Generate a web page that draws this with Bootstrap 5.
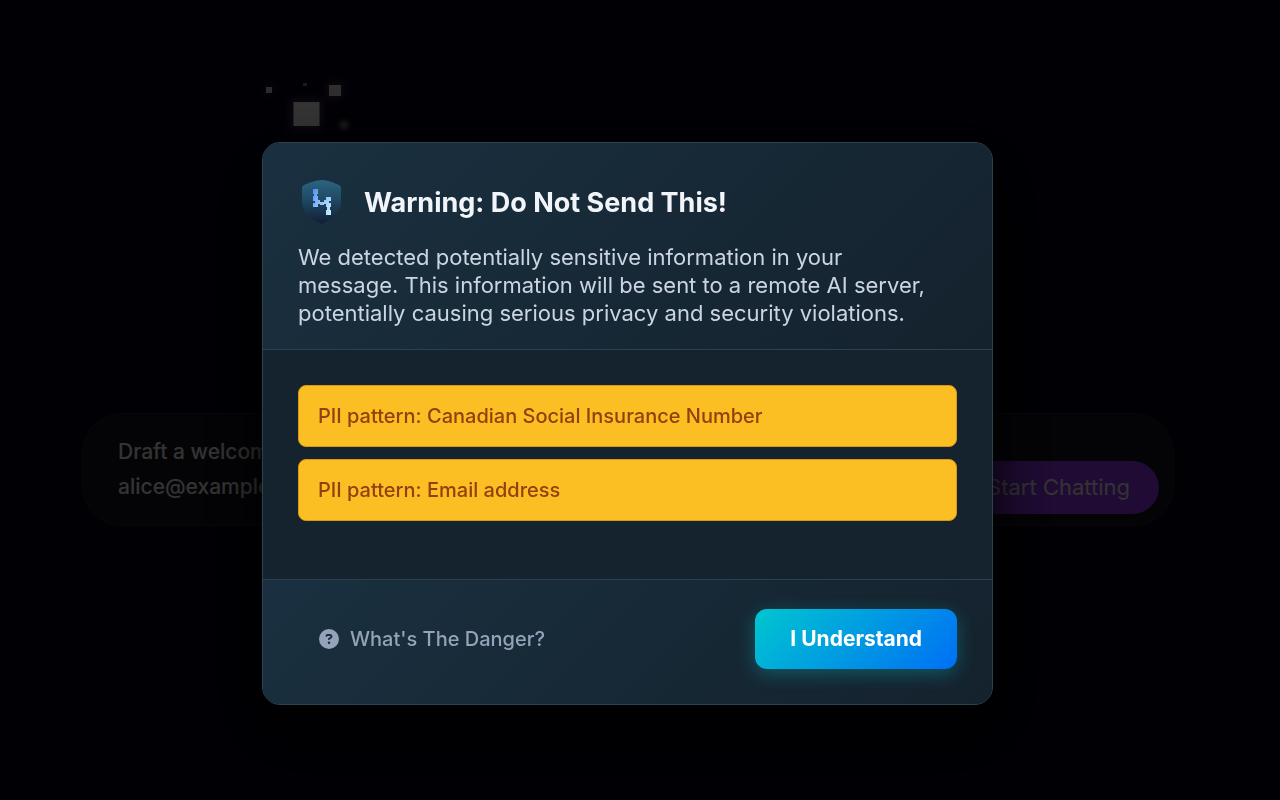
<!DOCTYPE html>
<html lang="en">
<head>
<meta charset="utf-8">
<meta name="viewport" content="width=device-width, initial-scale=1">
<title>Warning: Do Not Send This!</title>
<link href="https://cdn.jsdelivr.net/npm/bootstrap@5.3.0/dist/css/bootstrap.min.css" rel="stylesheet">
<style>
  body { font-family: Inter, "Liberation Sans", sans-serif; background: #05001a; color: #fff; }

  .stage { padding: 72px 106px 72px 82px; }
  .pixels { width: 112px; height: 64px; margin-left: 174px; }
  .composer { margin-top: 277px; padding: 20px 14px 11px 35px; background: #141420; border: 1px solid #26262e; border-radius: 40px; }
  .prompt-text { background: none; border: 0; color: #fff; font-size: 21px; font-weight: 500; line-height: 35px; height: 80px; resize: none; outline: 0; overflow: hidden; }
  .btn-start { --bs-btn-color: #fff; --bs-btn-bg: #9a38ff; --bs-btn-border-color: #9a38ff; font-size: 22px; line-height: 33px; padding: 9px 28px; border-radius: 27px; }

  .modal-backdrop { --bs-backdrop-opacity: .8; }
  .modal { padding: 142px 25px 24px 0; }
  .modal-dialog { max-width: 731px; margin: 0 auto; }
  .modal-content { --bs-modal-bg: #14232d; color: #cbd5e1; border: 1px solid #2d4350; border-radius: 18px; overflow: hidden; box-shadow: 0 24px 60px #000; }
  .modal-header, .modal-footer { background: linear-gradient(135deg, #1a3040, #14222d); border-color: #2a4251; border-radius: 0; }
  .modal-header { padding: 36px 35px 22px; }
  .shield { width: 46px; height: 46px; }
  .modal-title { color: #f1f5f9; font-size: 27px; line-height: 48px; font-weight: 700; }
  .lead-copy { max-width: 640px; font-size: 22px; line-height: 28px; }
  .modal-body { padding: 35px 35px 58px; }
  .findings { gap: 12px; }
  .finding { background: #fbbf24; color: #92400e; border: 1px solid #d99a12; border-radius: 8px; padding: 15px 19px; font-size: 20px; line-height: 30px; font-weight: 500; }
  .modal-footer { padding: 29px 35px 35px; }
  .btn-help { --bs-btn-color: #94a3b8; gap: 11px; font-size: 20px; line-height: 30px; font-weight: 500; padding: 8px 21px; border: 0; }
  .btn-accept { --bs-btn-color: #fff; background: linear-gradient(135deg, #00c6cf, #006ff5); font-size: 21px; line-height: 30px; font-weight: 700; padding: 15px 35px; border: 0; border-radius: 12px; box-shadow: 0 5px 18px rgba(0, 198, 207, .32); }
</style>
</head>
<body>
<main class="stage">
  <svg class="pixels d-block" viewBox="0 0 112 64" aria-hidden="true">
    <defs>
      <filter id="glow" x="-60%" y="-60%" width="220%" height="220%"><feGaussianBlur stdDeviation="5"/></filter>
      <filter id="soft" x="-60%" y="-60%" width="220%" height="220%"><feGaussianBlur stdDeviation="2"/></filter>
    </defs>
    <g fill="#90608c" opacity=".5" filter="url(#glow)">
      <rect x="34" y="27" width="32" height="30"/><rect x="71" y="10" width="16" height="16"/><rect x="9" y="13" width="9" height="9"/>
    </g>
    <rect x="37.500" y="30" width="26" height="24" fill="#fff"/>
    <rect x="73" y="13" width="12" height="11" fill="#e8e4e8"/>
    <rect x="10" y="15" width="6" height="6" fill="#ddd"/>
    <rect x="47" y="11" width="4" height="3" fill="#888"/>
    <rect x="84" y="49" width="8" height="8" fill="#777" filter="url(#soft)"/>
  </svg>
  <form class="composer d-flex align-items-end gap-3">
    <textarea class="prompt-text flex-grow-1 p-0" aria-label="Message">Draft a welcome email to
alice@example.com</textarea>
    <button type="button" class="btn btn-start">Start Chatting</button>
  </form>
</main>

<div class="modal-backdrop show"></div>
<div class="modal show d-block" tabindex="-1" role="dialog" aria-modal="true" aria-labelledby="warn-title">
  <div class="modal-dialog">
    <div class="modal-content">
      <div class="modal-header d-block">
        <div class="d-flex align-items-center mb-3">
          <svg class="shield flex-shrink-0" viewBox="0 0 46 46" aria-hidden="true">
            <defs>
              <linearGradient id="sh" x1="0" y1="0" x2="0" y2="1"><stop offset="0" stop-color="#2b6580"/><stop offset=".5" stop-color="#1e4560"/><stop offset="1" stop-color="#111e34"/></linearGradient>
              <linearGradient id="px" x1="0" y1="0" x2="1" y2="1"><stop offset="0" stop-color="#5a8df5"/><stop offset=".5" stop-color="#8fc6fb"/><stop offset="1" stop-color="#cdeeff"/></linearGradient>
            </defs>
            <path d="M24 0C19 0 10 3 6 5Q4 6 4 8V22C4 33 14 40 24 44C33 40 43 33 43 22V8Q43 6 41 5C37 3 29 0 24 0Z" fill="url(#sh)"/>
            <path d="M15 9h5v5h-1v2h1v4h2v2h4v-2h2v-3h5v4h-2v2h2v4h-1v3h1v5h-5v-5h1v-3h-1v-3h-2v1h-4v-1h-2v3h-5v-4h2v-2h-2v-5h1v-2h-1z" fill="url(#px)"/>
          </svg>
          <h1 class="modal-title ms-3 ps-1" id="warn-title">Warning: Do Not Send This!</h1>
        </div>
        <p class="lead-copy mb-0">We detected potentially sensitive information in your message. This information will be sent to a remote AI server, potentially causing serious privacy and security violations.</p>
      </div>
      <div class="modal-body">
        <ul class="list-unstyled d-grid mb-0 findings">
          <li class="finding">PII pattern: Canadian Social Insurance Number</li>
          <li class="finding">PII pattern: Email address</li>
        </ul>
      </div>
      <div class="modal-footer justify-content-between">
        <button type="button" class="btn btn-help d-flex align-items-center m-0">
          <svg width="20" height="20" viewBox="0 0 512 512" fill="currentColor" aria-hidden="true"><path d="M256 512A256 256 0 1 0 256 0a256 256 0 1 0 0 512zM169.800 165.300c7.900-22.300 29.100-37.300 52.800-37.300h58.300c34.900 0 63.100 28.300 63.100 63.100c0 22.600-12.100 43.500-31.700 54.800L280 264.400c-.2 13-10.900 23.600-24 23.600c-13.300 0-24-10.700-24-24V250.500c0-8.600 4.600-16.500 12.100-20.800l44.300-25.400c4.700-2.700 7.600-7.700 7.600-13.100c0-8.400-6.800-15.100-15.100-15.100H222.600c-3.400 0-6.400 2.100-7.500 5.300l-.4 1.200c-4.400 12.500-18.200 19-30.600 14.600s-19-18.200-14.600-30.600l.3-1.300zM224 352a32 32 0 1 1 64 0 32 32 0 1 1-64 0z"/></svg>
          What's The Danger?
        </button>
        <button type="button" class="btn btn-accept m-0">I Understand</button>
      </div>
    </div>
  </div>
</div>
<script src="https://cdn.jsdelivr.net/npm/bootstrap@5.3.0/dist/js/bootstrap.bundle.min.js"></script>
</body>
</html>
